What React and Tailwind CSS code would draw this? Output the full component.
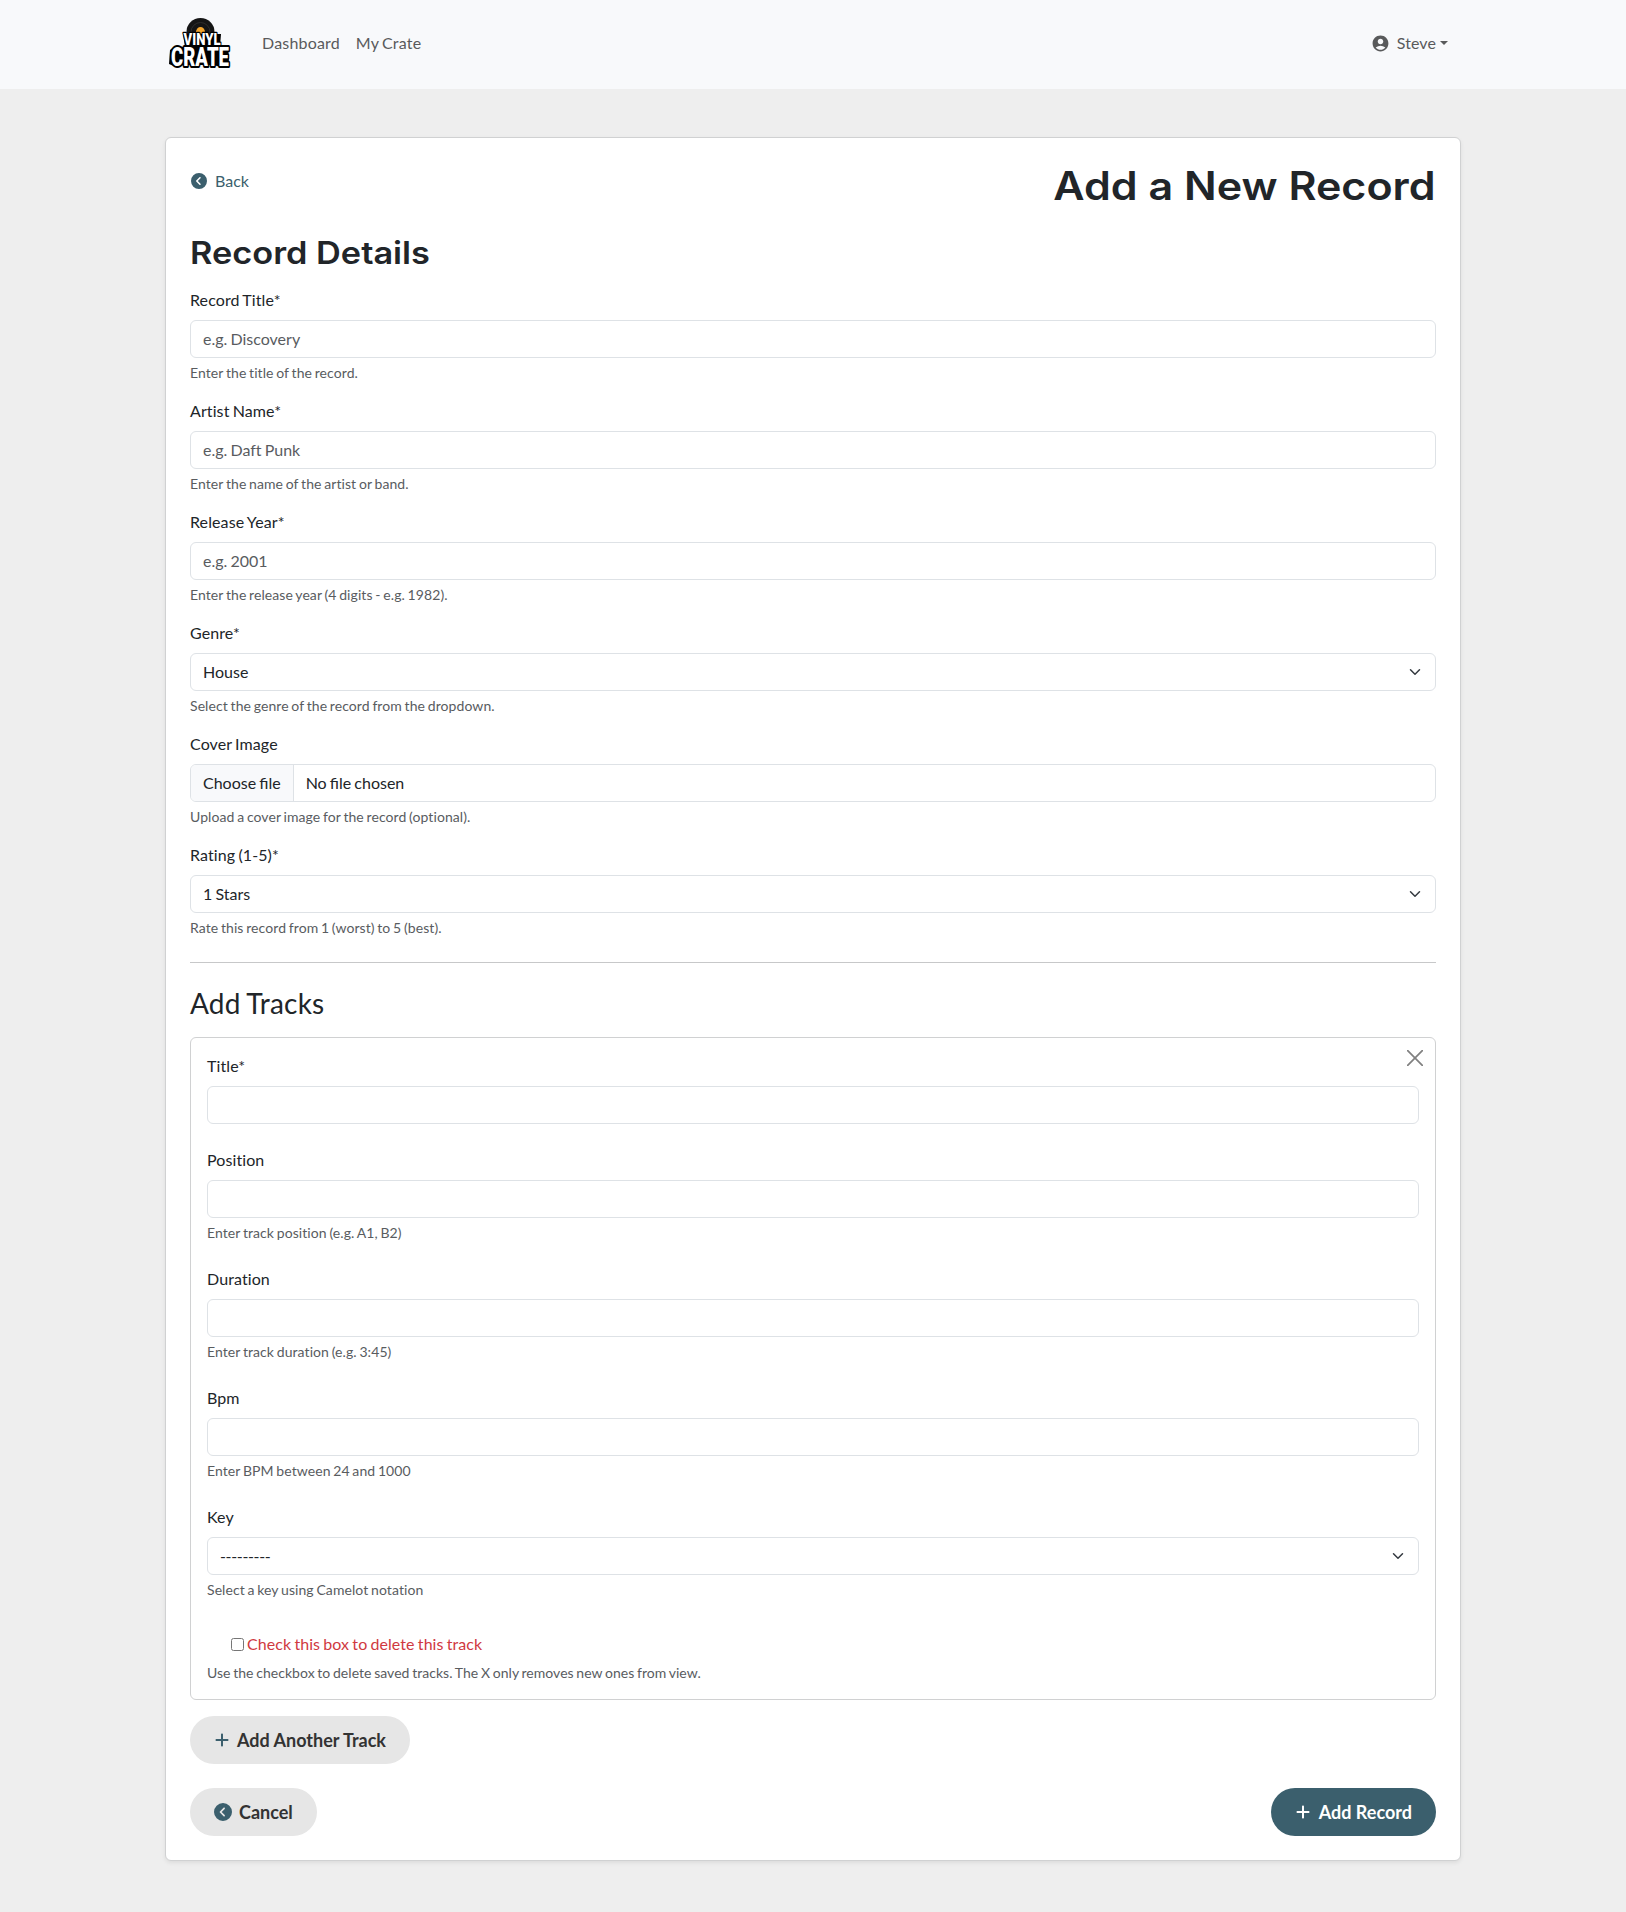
import React from "react";
import { FaCircleChevronLeft, FaPlus } from "react-icons/fa6";
import { MdAccountCircle } from "react-icons/md";

const control =
  "block h-[38px] w-full appearance-none rounded-md border border-[#dee2e6] bg-white px-3 text-base leading-6 [word-spacing:-0.06em] text-[#212529] placeholder:text-[#595c5f] placeholder:opacity-100 outline-none";
const textControl = `${control} pb-[2px]`;

function Logo() {
  return (
    <svg width="62" height="52" viewBox="0 0 62 52" className="block shrink-0 overflow-visible" aria-label="Vinyl Crate">
      <circle cx="32.5" cy="15" r="14" fill="#151515" />
      <circle cx="32.5" cy="15" r="9.5" fill="none" stroke="#2d2d2d" strokeWidth="1" />
      <circle cx="32.5" cy="14.5" r="4.4" fill="#f2a52e" />
      <path d="M15 17h38l-1 12 8 1 1 19-8 1-8-2H16l-8 2-7-3 1-14 5-4 10 1z" fill="#000" />
      <g
        fontFamily="Roboto, 'Liberation Sans', sans-serif"
        fontWeight="900"
        fill="#fff"
        stroke="#000"
        strokeLinejoin="round"
        paintOrder="stroke"
      >
        <text x="15.5" y="28" fontSize="16" strokeWidth="2.5" textLength="37" lengthAdjust="spacingAndGlyphs">VINYL</text>
        <text x="3" y="48.5" fontSize="25.5" strokeWidth="4" textLength="58" lengthAdjust="spacingAndGlyphs">CRATE</text>
      </g>
    </svg>
  );
}

function Chevron() {
  return (
    <svg viewBox="0 0 16 16" className="pointer-events-none absolute top-[13px] right-[13px] h-3 w-4">
      <path fill="none" stroke="#343a40" strokeLinecap="round" strokeLinejoin="round" strokeWidth="2" d="m2 5 6 6 6-6" />
    </svg>
  );
}

function Select({ value, className = "" }) {
  return (
    <div className="relative">
      <select className={`${control} ${className}`}>
        <option>{value}</option>
      </select>
      <Chevron />
    </div>
  );
}

function FileInput() {
  return (
    <div className="flex h-[38px] overflow-hidden rounded-md border border-[#dee2e6] text-base leading-9 tracking-normal text-[#212529] [font-variant-ligatures:normal]">
      <span className="border-r border-[#dee2e6] bg-[#f8f9fb] px-3">Choose file</span>
      <span className="px-3">No file chosen</span>
    </div>
  );
}

function Help({ className = "mt-1 tracking-[0.08px]", children }) {
  return <p className={`${className} text-sm leading-[21px] text-[#595c5f]`}>{children}</p>;
}

function Field({ label, help, children }) {
  return (
    <div>
      <label className="mb-2 block leading-6 tracking-[0.1px]">{label}</label>
      {children}
      {help && <Help>{help}</Help>}
    </div>
  );
}

const buttonBase = "flex h-12 items-center rounded-full px-6 pb-px text-lg leading-6 font-bold tracking-normal";

export default function App() {
  return (
    <div className="min-h-screen bg-[#eeeeee] font-[Lato,sans-serif] text-base text-[#212529] [font-variant-ligatures:none] [word-spacing:-0.06em]">
      <nav className="h-[89px] bg-[#f8f9fb]">
        <div className="mx-auto flex w-[1296px] items-center pt-[17px] text-[#595a5b]">
          <div className="ml-[3px]">
            <Logo />
          </div>
          <div className="ml-8 flex gap-4 tracking-[0.18px]">
            <a>Dashboard</a>
            <a>My Crate</a>
          </div>
          <div className="mr-[13px] ml-auto flex items-center">
            <MdAccountCircle className="mr-[7px] h-[19px] w-[19px]" />
            <span className="tracking-[0.1px]">Steve</span>
            <span className="ml-1 border-x-[4.8px] border-t-[4.8px] border-x-transparent border-t-[#595a5b]" />
          </div>
        </div>
      </nav>

      <main className="mx-auto mt-12 w-[1296px] rounded-md border border-[#d0d1d2] bg-white p-6 shadow-[0_2px_4px_rgba(0,0,0,0.075)]">
        <header className="flex h-12 items-start justify-between">
          <a className="mt-[7px] flex items-center text-[#3b5f6d]">
            <FaCircleChevronLeft className="mr-2 ml-px h-4 w-4" />
            Back
          </a>
          <h1 className="origin-right scale-x-[1.103] font-[Inter,sans-serif] text-[39px] leading-12 font-semibold whitespace-nowrap [word-spacing:0]">
            Add a New Record
          </h1>
        </header>
        <h2 className="mt-6 mb-4 h-[38px] w-fit origin-left scale-x-[1.107] font-[Inter,sans-serif] text-[31px] leading-[38px] font-semibold [word-spacing:0]">
          Record Details
        </h2>

        <section className="flex flex-col gap-4">
          <Field label="Record Title*" help="Enter the title of the record.">
            <input className={textControl} placeholder="e.g. Discovery" />
          </Field>
          <Field label="Artist Name*" help="Enter the name of the artist or band.">
            <input className={textControl} placeholder="e.g. Daft Punk" />
          </Field>
          <Field label="Release Year*" help="Enter the release year (4 digits - e.g. 1982).">
            <input className={textControl} placeholder="e.g. 2001" />
          </Field>
          <Field label="Genre*" help="Select the genre of the record from the dropdown.">
            <Select value="House" />
          </Field>
          <Field label="Cover Image" help="Upload a cover image for the record (optional).">
            <FileInput />
          </Field>
          <Field label="Rating (1-5)*" help="Rate this record from 1 (worst) to 5 (best).">
            <Select value="1 Stars" />
          </Field>
        </section>

        <hr className="my-6 border-[#c7c8c9]" />

        <h3 className="-mt-px mb-[17px] text-[28px] leading-[34px] tracking-[0.2px]">Add Tracks</h3>
        <section className="relative flex flex-col gap-6 rounded-md border border-[#d0d1d2] p-4">
          <svg viewBox="0 0 16 16" className="absolute top-3 right-3 h-4 w-4">
            <path d="M.7.7l14.6 14.6M15.3.7L.7 15.3" stroke="#808080" strokeWidth="1.7" strokeLinecap="round" />
          </svg>
          <Field label="Title*">
            <input className={textControl} />
          </Field>
          <Field label="Position" help="Enter track position (e.g. A1, B2)">
            <input className={textControl} />
          </Field>
          <Field label="Duration" help="Enter track duration (e.g. 3:45)">
            <input className={textControl} />
          </Field>
          <Field label="Bpm" help="Enter BPM between 24 and 1000">
            <input className={textControl} />
          </Field>
          <Field label="Key" help="Select a key using Camelot notation">
            <Select value="---------" className="tracking-[-0.35px]" />
          </Field>
          <div className="pt-2">
            <label className="flex items-center pl-6 tracking-[0.07px] text-[#d0393f]">
              <input type="checkbox" className="mr-[3px] h-[13px] w-[13px]" />
              Check this box to delete this track
            </label>
            <Help className="mt-[6px] tracking-[0.04px]">
              Use the checkbox to delete saved tracks. The X only removes new ones from view.
            </Help>
          </div>
        </section>

        <button className={`${buttonBase} mt-4 bg-[#e6e6e6] text-[#333]`}>
          <FaPlus className="mr-[7px] h-4 w-4 text-[#3b5f6d]" />
          Add Another Track
        </button>
        <div className="mt-6 flex justify-between">
          <button className={`${buttonBase} bg-[#e6e6e6] text-[#333]`}>
            <FaCircleChevronLeft className="mr-[7px] h-[18px] w-[18px] text-[#3b5f6d]" />
            Cancel
          </button>
          <button className={`${buttonBase} bg-[#3b5f6d] text-white`}>
            <FaPlus className="mr-2 h-4 w-4" />
            Add Record
          </button>
        </div>
      </main>
    </div>
  );
}
